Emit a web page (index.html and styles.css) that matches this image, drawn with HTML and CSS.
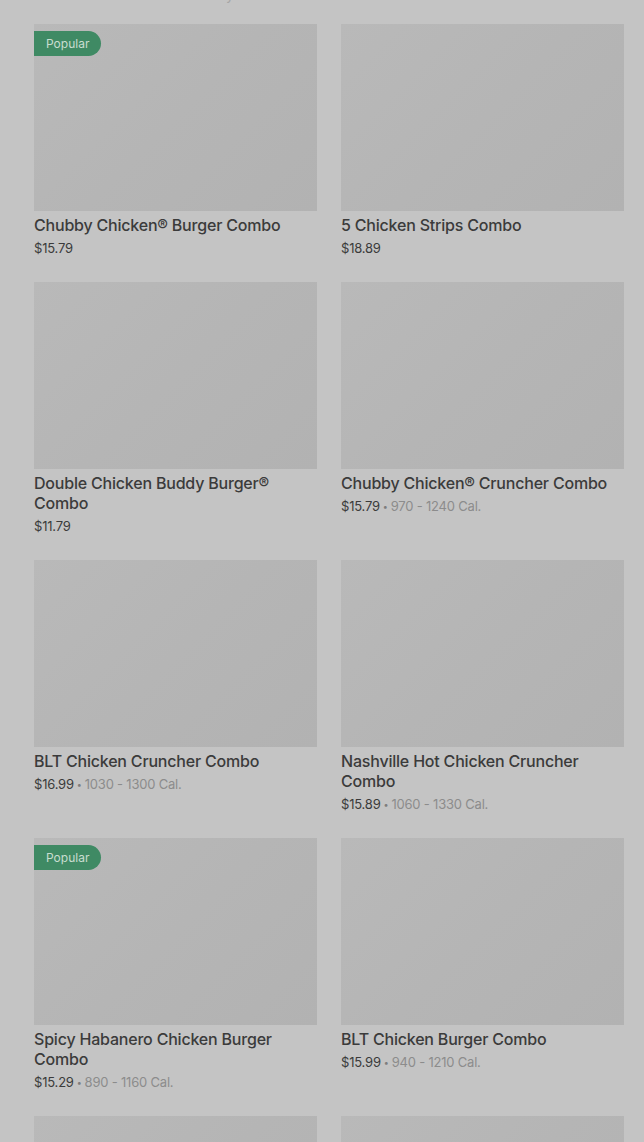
FILE: index.html
```html
<!DOCTYPE html>
<html lang="en">
<head>
    <meta charset="UTF-8">
    <meta name="viewport" content="width=device-width, initial-scale=1.0">
    <title>Combos</title>
    <link rel="stylesheet" href="styles.css">
</head>
<body>
    <div class="page">
        <p class="intro">Pick a combo and make it all your own.</p>

        <div class="menu-grid">
            <div class="item">
                <div class="photo"><span class="badge">Popular</span></div>
                <h3 class="name">Chubby Chicken® Burger Combo</h3>
                <p class="meta"><span class="price">$15.79</span></p>
            </div>
            <div class="item">
                <div class="photo"></div>
                <h3 class="name">5 Chicken Strips Combo</h3>
                <p class="meta"><span class="price">$18.89</span></p>
            </div>

            <div class="item">
                <div class="photo"></div>
                <h3 class="name">Double Chicken Buddy Burger® Combo</h3>
                <p class="meta"><span class="price">$11.79</span></p>
            </div>
            <div class="item">
                <div class="photo"></div>
                <h3 class="name">Chubby Chicken® Cruncher Combo</h3>
                <p class="meta"><span class="price">$15.79</span><span class="dot">•</span><span class="cal">970 - 1240 Cal.</span></p>
            </div>

            <div class="item">
                <div class="photo"></div>
                <h3 class="name">BLT Chicken Cruncher Combo</h3>
                <p class="meta"><span class="price">$16.99</span><span class="dot">•</span><span class="cal">1030 - 1300 Cal.</span></p>
            </div>
            <div class="item">
                <div class="photo"></div>
                <h3 class="name">Nashville Hot Chicken Cruncher Combo</h3>
                <p class="meta"><span class="price">$15.89</span><span class="dot">•</span><span class="cal">1060 - 1330 Cal.</span></p>
            </div>

            <div class="item">
                <div class="photo"><span class="badge">Popular</span></div>
                <h3 class="name">Spicy Habanero Chicken Burger Combo</h3>
                <p class="meta"><span class="price">$15.29</span><span class="dot">•</span><span class="cal">890 - 1160 Cal.</span></p>
            </div>
            <div class="item">
                <div class="photo"></div>
                <h3 class="name">BLT Chicken Burger Combo</h3>
                <p class="meta"><span class="price">$15.99</span><span class="dot">•</span><span class="cal">940 - 1210 Cal.</span></p>
            </div>

            <div class="item">
                <div class="photo"></div>
            </div>
            <div class="item">
                <div class="photo"></div>
            </div>
        </div>
    </div>
</body>
</html>
```

FILE: styles.css
```css
* {
    margin: 0;
    padding: 0;
    box-sizing: border-box;
}

html, body {
    background-color: #c4c4c4;
}

body {
    font-family: Inter, "Noto Sans", sans-serif;
    color: #3a3a3a;
    overflow: hidden;
    height: 1142px;
}

.page {
    padding: 0 20px 0 34px;
}

.intro {
    font-size: 14px;
    line-height: 20px;
    color: #a6a6a6;
    margin-top: -15px;
    height: 20px;
    margin-bottom: 19px;
}

.menu-grid {
    display: grid;
    grid-template-columns: 283px 283px;
    column-gap: 24px;
    row-gap: 25px;
    align-items: start;
}

.photo {
    position: relative;
    height: 187px;
    background: linear-gradient(135deg, #b9b9b9 0%, #b5b5b5 50%, #b2b2b2 100%);
}

.badge {
    position: absolute;
    top: 7px;
    left: 0;
    height: 25px;
    padding: 0 12px;
    border-radius: 0 13px 13px 0;
    background-color: #3f8a64;
    color: #c9ddd0;
    font-size: 12px;
    line-height: 25px;
}

.name {
    margin-top: 4px;
    font-size: 16px;
    line-height: 20px;
    font-weight: 500;
    letter-spacing: -0.2px;
    color: #3b3b3b;
}

.meta {
    margin-top: 4px;
    height: 18px;
    font-size: 13px;
    line-height: 18px;
    letter-spacing: -0.2px;
}

.price {
    color: #3b3b3b;
}

.dot {
    display: inline-block;
    color: #7d7d7d;
    font-size: 9px;
    line-height: 1;
    margin: 0 3px;
    vertical-align: 1px;
}

.cal {
    color: #8c8c8c;
}
```
